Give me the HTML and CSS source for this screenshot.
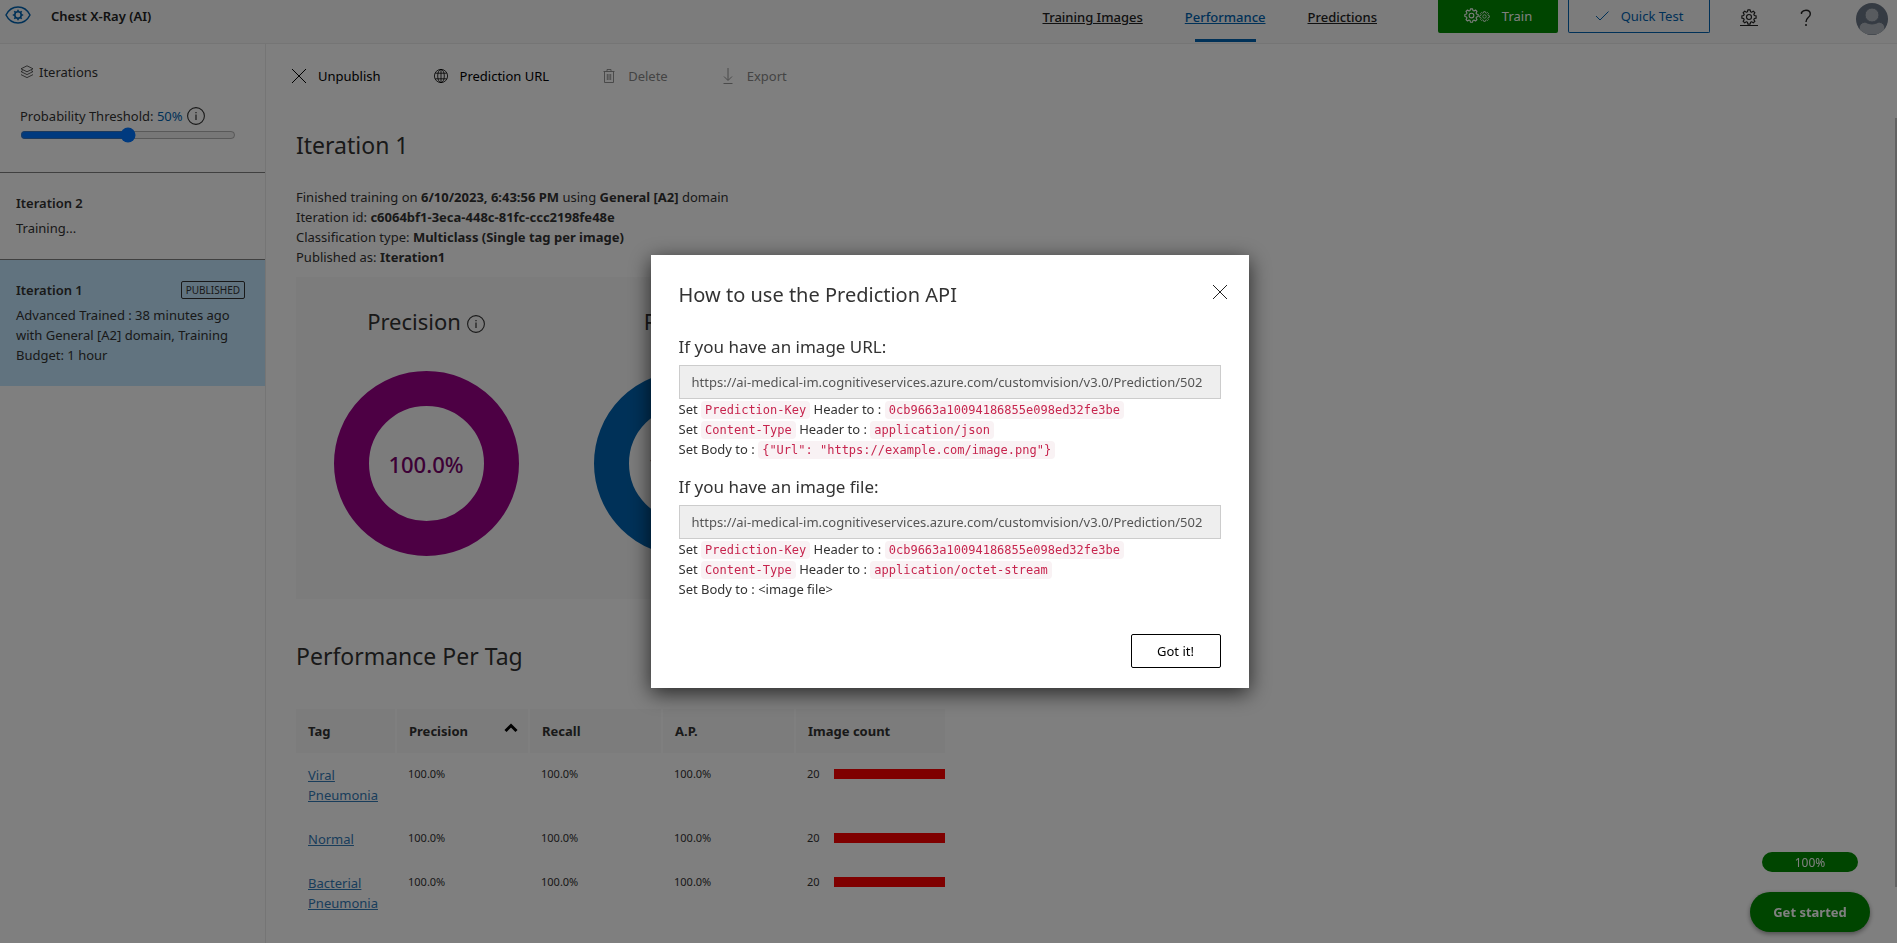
FILE: index.html
```html
<!DOCTYPE html>
<html lang="en">
<head>
<meta charset="utf-8">
<meta name="viewport" content="width=device-width, initial-scale=1">
<title>Chest X-Ray (AI) - Performance</title>
<link rel="stylesheet" href="styles.css">
</head>
<body>
<svg class="sprite" aria-hidden="true">
  <symbol id="gear" viewBox="0 0 18 18">
    <path fill="none" stroke="currentColor" stroke-width="1.3" stroke-linejoin="round" d="M7.7 1h2.6l.4 2 1.3.6 1.8-1.2 1.8 1.8-1.2 1.8.6 1.3 2 .4v2.6l-2 .4-.6 1.3 1.2 1.8-1.8 1.8-1.8-1.2-1.3.6-.4 2H7.7l-.4-2-1.3-.6-1.8 1.2-1.8-1.8L3.600 12 3 10.700l-2-.4V7.700l2-.4.6-1.300-1.200-1.800 1.800-1.800L6 3.600 7.300 3z"/>
    <circle cx="9" cy="9" r="2.800" fill="none" stroke="currentColor" stroke-width="1.300"/>
  </symbol>
  <symbol id="info" viewBox="0 0 18 18">
    <circle cx="9" cy="9" r="8.400" fill="none" stroke="currentColor" stroke-width="1.100"/>
    <path d="M9 7.500v5.500M9 5v1.300" stroke="currentColor" stroke-width="1.200"/>
  </symbol>
  <symbol id="cross" viewBox="0 0 16 16">
    <path d="M1 1l14 14M15 1L1 15" fill="none" stroke="currentColor" stroke-width="1"/>
  </symbol>
</svg>

<header class="topbar">
  <svg class="logo" viewBox="0 0 26 18" aria-hidden="true" fill="none" stroke="currentColor">
    <path stroke-width="1.500" d="M1 9C3.500 4 8 1 13 1s9.500 3 12 8c-2.500 5-7 8-12 8S3.500 14 1 9z"/>
    <circle cx="13" cy="9" r="3.200" stroke-width="1.600"/>
    <path stroke-width="1.600" d="M13 3.800v2M13 12.200v2M7.800 9h2M16.200 9h2M9.300 5.300l1.500 1.500M15.200 11.200l1.500 1.500M16.700 5.300l-1.500 1.500M10.800 11.200l-1.500 1.500"/>
  </svg>
  <span class="project">Chest X-Ray (AI)</span>
  <nav class="tabs">
    <a href="#images">Training Images</a>
    <a href="#performance" class="current" aria-current="page">Performance</a>
    <a href="#predictions">Predictions</a>
  </nav>
  <button class="action train" type="button">
    <svg class="gears" viewBox="0 0 26 16" aria-hidden="true"><use href="#gear" width="15" height="15"/><use href="#gear" x="15" y="3" width="11" height="11"/></svg>
    Train
  </button>
  <button class="action quick" type="button">
    <svg class="tick" viewBox="0 0 14 12" aria-hidden="true"><path d="M1 6l4 4 8.500-8.500" fill="none" stroke="currentColor"/></svg>
    Quick Test
  </button>
  <a class="settings" href="#settings" aria-label="Settings"><svg viewBox="0 0 18 18"><use href="#gear"/></svg></a>
  <button class="help" type="button" aria-label="Help">
    <svg viewBox="0 0 12 18"><path d="M1.500 5V3.500Q3 1.200 6 1.200q4.300 0 4.300 3.800 0 2-2.300 3.800Q6 10.500 6 13" fill="none" stroke="currentColor" stroke-width="1.400"/><circle cx="6" cy="16" r="1"/></svg>
  </button>
  <svg class="avatar" viewBox="0 0 32 32" role="img" aria-label="Account">
    <clipPath id="round"><circle cx="16" cy="16" r="16"/></clipPath>
    <g clip-path="url(#round)"><path fill="#6b7686" d="M0 0h32v32H0z"/><g fill="#b0b7be" stroke="#6b7686"><circle cx="16" cy="12" r="7"/><path d="M3 32v-6q0-6 6-7 7 4 14 0 6 1 6 7v6z"/></g></g>
  </svg>
</header>

<div class="body">
  <aside class="sidebar">
    <section class="threshold">
      <h2 class="side-title">
        <svg viewBox="0 0 14 14" aria-hidden="true" fill="none" stroke="currentColor" stroke-width=".8"><path d="M7 .8l6 3-6 3-6-3zM1 6.600l6 3 6-3M1 9.600l6 3 6-3M1 6.600l1.800-1M13 6.600l-1.800-1"/></svg>
        Iterations
      </h2>
      <div class="slider-label">
        <label for="prob">Probability Threshold: <output class="blue">50%</output></label>
        <svg class="info" viewBox="0 0 18 18" aria-hidden="true"><use href="#info"/></svg>
      </div>
      <input id="prob" class="slider" type="range" min="0" max="100" value="50">
    </section>
    <section class="iteration">
      <h3>Iteration 2</h3>
      <p>Training...</p>
    </section>
    <section class="iteration selected">
      <div class="iteration-head"><h3>Iteration 1</h3><span class="badge">PUBLISHED</span></div>
      <p>Advanced Trained : 38 minutes ago with General [A2] domain, Training Budget: 1 hour</p>
    </section>
  </aside>

  <main class="content">
    <div class="toolbar">
      <button type="button"><svg viewBox="0 0 16 16" aria-hidden="true"><use href="#cross"/></svg>Unpublish</button>
      <button type="button"><svg viewBox="0 0 16 16" aria-hidden="true" fill="none" stroke="currentColor" stroke-width=".8"><circle cx="8" cy="8" r="6.600"/><ellipse cx="8" cy="8" rx="3.300" ry="6.600"/><path d="M8 1.400v13.200M2.200 5.200h11.600M2.200 10.800h11.600"/></svg>Prediction URL</button>
      <button type="button" disabled><svg viewBox="0 0 16 16" aria-hidden="true" fill="none" stroke="currentColor" stroke-width=".9"><path d="M2.500 3.500h11M6 3.500v-2h4v2M3.500 3.500v11h9v-11M6.300 6v6M8 6v6M9.700 6v6"/></svg>Delete</button>
      <button type="button" disabled><svg viewBox="0 0 16 16" aria-hidden="true" fill="none" stroke="currentColor" stroke-width=".9"><path d="M8 0v12M4 8.500L8 12.500l4-4M3.500 15.500h9"/></svg>Export</button>
    </div>

    <h1>Iteration 1</h1>
    <div class="facts">
      <p>Finished training on <b>6/10/2023, 6:43:56 PM</b> using <b>General [A2]</b> domain</p>
      <p>Iteration id: <b>c6064bf1-3eca-448c-81fc-ccc2198fe48e</b></p>
      <p>Classification type: <b>Multiclass (Single tag per image)</b></p>
      <p>Published as: <b>Iteration1</b></p>
    </div>

    <div class="metrics">
      <section class="metric purple">
        <h2>Precision <svg class="info" viewBox="0 0 18 18" aria-hidden="true"><use href="#info"/></svg></h2>
        <div class="donut">100.0%</div>
      </section>
      <section class="metric azure">
        <h2>Recall <svg class="info" viewBox="0 0 18 18" aria-hidden="true"><use href="#info"/></svg></h2>
        <div class="donut">100.0%</div>
      </section>
    </div>

    <h1 class="per-tag">Performance Per Tag</h1>
    <table class="tags">
      <colgroup><col class="c-tag"><col class="c-num"><col class="c-num"><col class="c-num"><col class="c-count"></colgroup>
      <thead>
        <tr>
          <th scope="col">Tag</th>
          <th scope="col"><span class="sorted">Precision <svg viewBox="0 0 14 10" aria-hidden="true"><path d="M1.500 8L7 2.500 12.500 8" fill="none" stroke="currentColor" stroke-width="3"/></svg></span></th>
          <th scope="col">Recall</th>
          <th scope="col">A.P.</th>
          <th scope="col">Image count</th>
        </tr>
      </thead>
      <tbody>
        <tr><td><a href="#viral">Viral Pneumonia</a></td><td>100.0%</td><td>100.0%</td><td>100.0%</td><td><div class="count">20<span class="bar"></span></div></td></tr>
        <tr><td><a href="#normal">Normal</a></td><td>100.0%</td><td>100.0%</td><td>100.0%</td><td><div class="count">20<span class="bar"></span></div></td></tr>
        <tr><td><a href="#bacterial">Bacterial Pneumonia</a></td><td>100.0%</td><td>100.0%</td><td>100.0%</td><td><div class="count">20<span class="bar"></span></div></td></tr>
      </tbody>
    </table>
    <div class="scrollbar" aria-hidden="true"></div>
  </main>
</div>

<div class="guide">
  <div class="progress">100%</div>
  <button class="start" type="button">Get started</button>
</div>

<div class="overlay">
  <div class="dialog" role="dialog" aria-modal="true" aria-labelledby="dlg-title">
    <div class="dialog-head">
      <h2 id="dlg-title">How to use the Prediction API</h2>
      <button class="close" type="button" aria-label="Close"><svg viewBox="0 0 16 16"><use href="#cross"/></svg></button>
    </div>
    <section class="howto">
      <h3><label for="url-image">If you have an image URL:</label></h3>
      <input id="url-image" type="text" readonly value="https://ai-medical-im.cognitiveservices.azure.com/customvision/v3.0/Prediction/502">
      <p>Set <code>Prediction-Key</code> Header to : <code>0cb9663a10094186855e098ed32fe3be</code></p>
      <p>Set <code>Content-Type</code> Header to : <code>application/json</code></p>
      <p>Set Body to : <code>{"Url": "https://example.com/image.png"}</code></p>
    </section>
    <section class="howto">
      <h3><label for="url-file">If you have an image file:</label></h3>
      <input id="url-file" type="text" readonly value="https://ai-medical-im.cognitiveservices.azure.com/customvision/v3.0/Prediction/502">
      <p>Set <code>Prediction-Key</code> Header to : <code>0cb9663a10094186855e098ed32fe3be</code></p>
      <p>Set <code>Content-Type</code> Header to : <code>application/octet-stream</code></p>
      <p>Set Body to : &lt;image file&gt;</p>
    </section>
    <div class="dialog-foot"><button class="gotit" type="button">Got it!</button></div>
  </div>
</div>
</body>
</html>
```

FILE: styles.css
```css
* { box-sizing: border-box; }

body {
  margin: 0;
  height: 100vh;
  display: flex;
  flex-direction: column;
  overflow: hidden;
  background: #fff;
  color: #333;
  font: 400 13px/20px "Noto Sans", "Open Sans", sans-serif;
}

h1, h2, h3, p { margin: 0; font-weight: 400; }
button, input { font: inherit; color: inherit; }
button { padding: 0; border: 0; background: none; }
svg { display: block; flex: none; }
.sprite { position: absolute; width: 0; height: 0; }
.info { width: 18px; height: 18px; }
.blue { color: #0063b1; }

/* Top bar */
.topbar {
  display: flex;
  align-items: flex-start;
  height: 44px;
  padding-right: 9px;
  padding-left: 5px;
  background: #f8f8f8;
  border-bottom: 1px solid #eaeaea;
}
.logo { width: 26px; height: 18px; margin-top: 6px; color: #0063b1; }
.project { margin: 6px 0 0 20px; font-weight: 600; color: #222; }
.tabs { display: flex; gap: 42px; margin: 0 61px 0 auto; }
.tabs a { display: flex; flex-direction: column; align-items: center; padding-top: 7px; font-weight: 500; color: #222; }
.tabs .current { color: #0063b1; }
.tabs .current::after { content: ""; width: 61px; height: 3px; margin-top: 12px; background: #0063b1; }
.action { display: flex; align-items: center; justify-content: center; height: 33px; padding-bottom: 1px; border-radius: 0 0 2px 2px; }
.train { gap: 12px; width: 120px; background: #008a00; color: #fff; }
.gears { width: 26px; height: 16px; }
.quick { gap: 12px; width: 142px; margin: 0 30px 0 10px; border: 1px solid #0063b1; border-top: 0; color: #0063b1; }
.tick { width: 14px; height: 12px; }
.settings { width: 18px; margin-top: 9px; border-bottom: 1px solid currentColor; color: #222; }
.settings svg { height: 16px; width: 18px; }
.help { margin: 9px 44px 0 42px; color: #222; }
.help svg { width: 12px; height: 18px; fill: currentColor; }
.avatar { width: 32px; height: 32px; margin-top: 3px; }

/* Sidebar */
.body { display: flex; flex: 1; min-height: 0; }
.sidebar { width: 266px; border-right: 1px solid #eaeaea; }
.threshold { padding: 18px 20px 29px; }
.side-title { display: flex; align-items: center; gap: 5px; font-size: 13px; line-height: 20px; }
.side-title svg { width: 14px; height: 14px; }
.slider-label { display: flex; align-items: center; gap: 4px; margin-top: 24px; }
.slider { display: block; width: 216px; height: 16px; margin: 1px 0 0; accent-color: #0075ff; }
.iteration { padding: 20px 20px 21px 16px; border-top: 1px solid #808080; }
.iteration h3 { font-size: 13px; line-height: 20px; font-weight: 600; }
.iteration p { margin-top: 5px; }
.iteration-head { display: flex; align-items: center; justify-content: space-between; }
.badge { padding: 0 4px; border: 1px solid #333; border-radius: 2px; font-size: 10px; line-height: 16px; }
.selected { background: #c2e6fe; }

/* Main column */
.content { position: relative; flex: 1; min-width: 0; padding: 22px 30px 0; }
.toolbar { display: flex; gap: 52px; margin-left: -5px; color: #000; }
.toolbar button { display: flex; align-items: center; gap: 11px; }
.toolbar button:disabled { color: #888; }
.toolbar svg { width: 16px; height: 16px; }
h1 { margin-top: 43px; font-size: 23px; line-height: 32px; }
.facts { margin-top: 26px; }
.facts b { font-weight: 700; }
.metrics { display: flex; width: 780px; height: 322px; margin-top: 10px; background: #f8f8f8; }
.metric { display: flex; flex-direction: column; align-items: center; width: 260px; padding-top: 28px; }
.metric h2 { display: flex; align-items: center; gap: 6px; font-size: 22px; line-height: 32px; }
.metric .info { margin-top: 6px; }
.donut { display: grid; place-items: center; width: 185px; height: 185px; margin-top: 34px; border: 35px solid; border-radius: 50%; font-size: 22px; font-weight: 500; }
.purple .donut { border-color: #9a0089; color: #7a006d; }
.azure .donut { border-color: #0063b1; color: #00508f; }
.per-tag { margin-top: 41px; }

.tags { width: 649px; margin-top: 37px; border-collapse: collapse; table-layout: fixed; }
.c-tag { width: 100px; }
.c-num { width: 133px; }
.tags th { height: 44px; padding: 0 12px; border-left: 2px solid #fff; background: #f8f8f8; background-clip: padding-box; text-align: left; font-weight: 700; }
.tags th:first-child { border-left: 0; }
.sorted { display: flex; align-items: center; justify-content: space-between; }
.sorted svg { width: 14px; height: 10px; margin: -6px -2px 0 0; color: #000; }
.tags td { padding: 12px 0 12px 12px; vertical-align: top; font-size: 11px; line-height: 18px; }
.tags a { font-size: 13px; line-height: 20px; color: #337ab7; }
.count { display: flex; align-items: center; gap: 14px; }
.bar { flex: 1; height: 10px; background: #f00; }
.scrollbar { position: absolute; top: 74px; right: 0; width: 2px; height: 769px; background: #c4c4c4; }

/* Getting-started widget */
.guide { position: fixed; right: 27px; bottom: 11px; display: flex; flex-direction: column; align-items: center; gap: 20px; }
.progress { width: 96px; height: 20px; border-radius: 10px; background: #008a00; color: #fff; font-size: 12px; line-height: 22px; text-align: center; }
.start { width: 120px; height: 40px; border-radius: 20px; background: #008a00; color: #fff; font-weight: 700; box-shadow: 0 2px 5px rgba(0, 0, 0, .4); }

/* Dialog */
.overlay { position: fixed; inset: 0; display: flex; align-items: center; justify-content: center; padding-left: 2px; background: rgba(0, 0, 0, .5); }
.dialog { width: 598px; max-width: 100%; padding: 27px 28px 20px; background: #fff; box-shadow: 0 5px 20px rgba(0, 0, 0, .7); }
.dialog-head { display: flex; justify-content: space-between; align-items: flex-start; }
.dialog-head h2 { font-size: 20px; line-height: 26px; }
.close { margin: 2px -7px 0 0; color: #222; }
.close svg { width: 16px; height: 16px; }
.howto { margin-top: 26px; }
.howto + .howto { margin-top: 15px; }
.howto h3 { font-size: 17px; line-height: 26px; }
.howto input { display: block; width: 100%; height: 34px; margin-top: 5px; padding: 0 12px; border: 1px solid #ccc; border-radius: 0; background: #eee; color: #555; }
.howto p { white-space: nowrap; }
.howto code { padding: 2px 4px; border-radius: 4px; background: #f9f2f4; color: #c7254e; font: 12px/14px "DejaVu Sans Mono", "Liberation Mono", monospace; }
.dialog-foot { display: flex; justify-content: flex-end; margin-top: 35px; }
.gotit { width: 90px; height: 34px; border: 1px solid #000; border-radius: 2px; color: #000; }
```
